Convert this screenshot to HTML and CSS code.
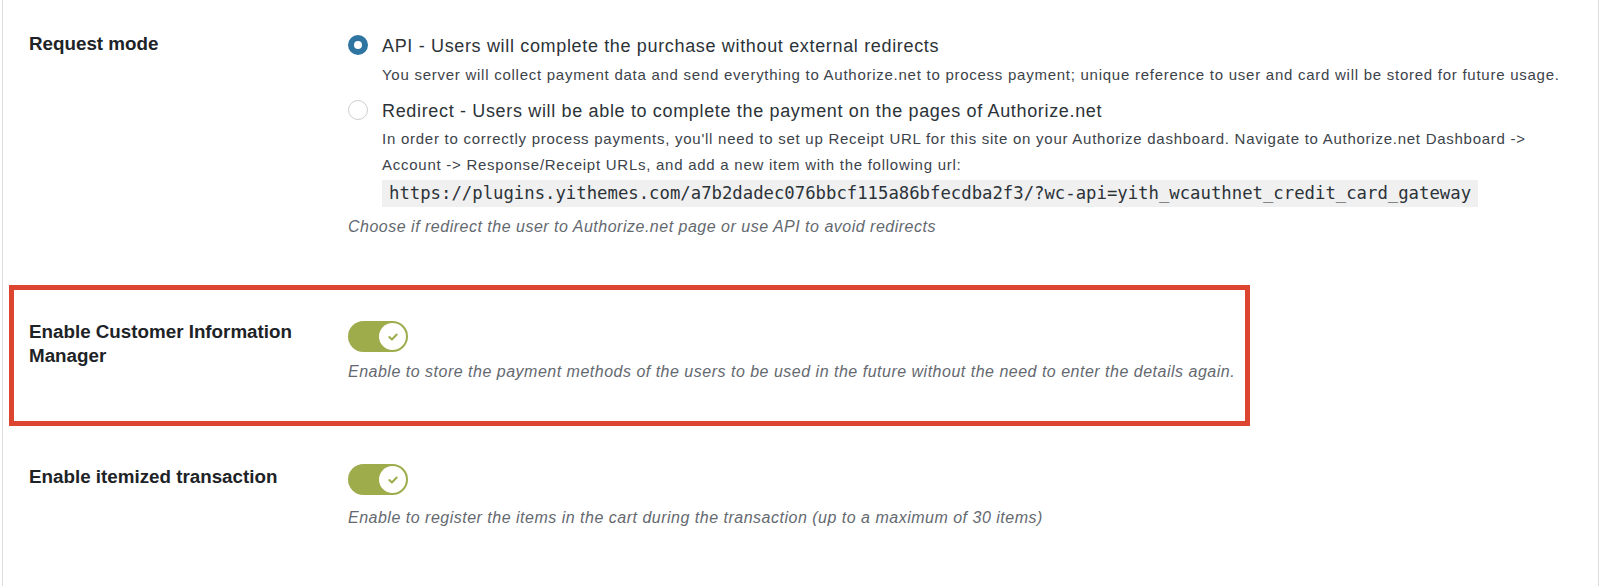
FILE: index.html
```html
<!DOCTYPE html>
<html>

<head>
    <title>
        Authorize.net gateway settings
    </title>
    <link rel="stylesheet" href="styles.css">
</head>

<body>
    <div class="panel">
        <div class="row row-mode">
            <div class="label">Request mode</div>
            <div class="field">
                <div class="option">
                    <span class="radio checked"></span>
                    <span class="option-title">API - Users will complete the purchase without external redirects</span>
                </div>
                <p class="option-desc">You server will collect payment data and send everything to Authorize.net to process payment; unique reference to user and card will be stored for future usage.</p>
                <div class="option option-second">
                    <span class="radio"></span>
                    <span class="option-title">Redirect - Users will be able to complete the payment on the pages of Authorize.net</span>
                </div>
                <p class="option-desc option-desc-long">In order to correctly process payments, you'll need to set up Receipt URL for this site on your Authorize dashboard. Navigate to Authorize.net Dashboard -&gt; Account -&gt; Response/Receipt URLs, and add a new item with the following url:</p>
                <div class="url"><code>https://plugins.yithemes.com/a7b2dadec076bbcf115a86bfecdba2f3/?wc-api=yith_wcauthnet_credit_card_gateway</code></div>
                <p class="description desc-mode">Choose if redirect the user to Authorize.net page or use API to avoid redirects</p>
            </div>
        </div>

        <div class="row row-cim">
            <div class="label">Enable Customer Information Manager</div>
            <div class="field">
                <span class="toggle"><span class="knob"><svg width="12" height="10" viewBox="0 0 12 10"><path d="M2.3 5.1 L4.9 7.5 L9.7 2.5" fill="none" stroke="#9fac4b" stroke-width="2" stroke-linecap="round" stroke-linejoin="round"/></svg></span></span>
                <p class="description">Enable to store the payment methods of the users to be used in the future without the need to enter the details again.</p>
            </div>
        </div>

        <div class="row row-items">
            <div class="label">Enable itemized transaction</div>
            <div class="field">
                <span class="toggle"><span class="knob"><svg width="12" height="10" viewBox="0 0 12 10"><path d="M2.3 5.1 L4.9 7.5 L9.7 2.5" fill="none" stroke="#9fac4b" stroke-width="2" stroke-linecap="round" stroke-linejoin="round"/></svg></span></span>
                <p class="description">Enable to register the items in the cart during the transaction (up to a maximum of 30 items)</p>
            </div>
        </div>
    </div>
</body>

</html>
```

FILE: styles.css
```css
body {
    margin: 0;
    background-color: #ffffff;
    font-family: 'Liberation Sans', Arial, sans-serif;
    color: #1d2327;
}

p {
    margin: 0;
}

.panel {
    margin: 0 1px 0 2px;
    min-height: 586px;
    border-left: 1px solid #dcdcde;
    border-right: 1px solid #dcdcde;
    box-sizing: border-box;
    overflow: hidden;
}

.row {
    display: flex;
    align-items: flex-start;
}

.label {
    width: 319px;
    flex-shrink: 0;
    box-sizing: border-box;
    margin-top: -1px;
    padding-right: 30px;
    font-size: 18.8px;
    line-height: 24px;
    font-weight: bold;
    color: #1d2327;
}

.field {
    flex: 1;
}

.row-mode {
    padding: 34px 0 0 26px;
}

.row-mode .label {
    margin-top: -2px;
}

.row-cim {
    margin: 45px 0 0 6px;
    width: 1241px;
    box-sizing: border-box;
    border: 5px solid #dc4631;
    padding: 31px 0 36px 15px;
}

.row-items {
    padding: 39px 0 0 26px;
}

.row-items .label {
    margin-top: 0;
}

/* radio options */
.option {
    display: flex;
    align-items: flex-start;
}

.option-second {
    margin-top: 11px;
}

.radio {
    width: 20px;
    height: 20px;
    margin: 1px 14px 0 0;
    box-sizing: border-box;
    border-radius: 50%;
    border: 1px solid #cfcfcf;
    background-color: #ffffff;
    flex-shrink: 0;
}

.radio.checked {
    border: 6px solid #2e76a1;
}

.option-title {
    font-size: 18px;
    line-height: 24px;
    letter-spacing: 0.66px;
    color: #2c3338;
}

.option-desc {
    margin: 4px 0 0 34px;
    font-size: 15px;
    line-height: 26px;
    letter-spacing: 0.74px;
    color: #3c434a;
}

.option-desc-long {
    margin-top: 3px;
    max-width: 1150px;
}

.url {
    display: flex;
    margin: 2px 0 0 34px;
}

.url code {
    display: block;
    padding: 3px 7px;
    font-family: 'DejaVu Sans Mono', 'Liberation Mono', monospace;
    font-size: 17.3px;
    line-height: 21px;
    background-color: #f0f0f1;
    color: #2c3338;
}

.description {
    font-size: 16px;
    line-height: 26px;
    font-style: italic;
    letter-spacing: 0.5px;
    color: #646970;
}

.desc-mode {
    margin-top: 7px;
}

/* switch */
.toggle {
    display: block;
    position: relative;
    width: 60px;
    height: 31px;
    border-radius: 16px;
    background-color: #9fac4b;
}

.knob {
    position: absolute;
    top: 2px;
    right: 2px;
    width: 27px;
    height: 27px;
    border-radius: 50%;
    background-color: #ffffff;
    display: flex;
    align-items: center;
    justify-content: center;
}

.row-cim .description {
    margin-top: 7px;
}

.row-items .description {
    margin-top: 10px;
}

.row-items .toggle {
    margin-top: -1px;
}
```
